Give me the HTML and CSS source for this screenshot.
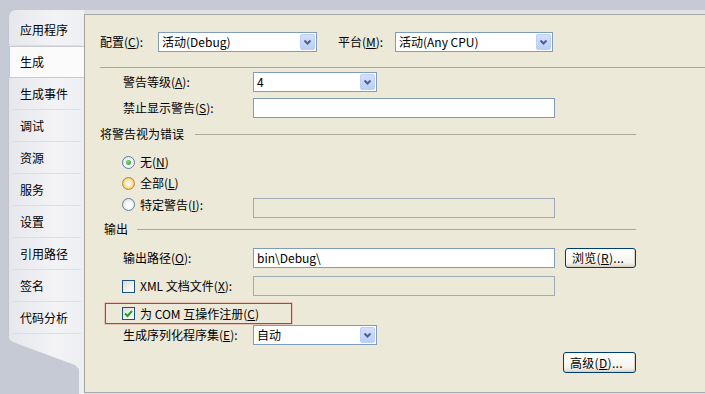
FILE: index.html
```html
<!DOCTYPE html>
<html lang="zh-CN">
<head>
<meta charset="utf-8">
<title>生成</title>
<link rel="stylesheet" href="styles.css">
</head>
<body>
<div class="window">
  <nav class="tabs">
    <div class="tab">应用程序</div>
    <div class="tab active">生成</div>
    <div class="tab">生成事件</div>
    <div class="tab">调试</div>
    <div class="tab">资源</div>
    <div class="tab">服务</div>
    <div class="tab">设置</div>
    <div class="tab">引用路径</div>
    <div class="tab">签名</div>
    <div class="tab">代码分析</div>
  </nav>
  <div class="pane">
    <main class="page">
      <div class="row">
        <span class="lbl w58">配置(<u>C</u>):</span>
        <div class="combo w159"><span class="val">活动(Debug)</span><span class="arrow"><svg width="15" height="16" viewBox="0 0 15 16"><path d="M4.5 6.5 L7.5 9.5 L10.5 6.5" fill="none" stroke="#4d6185" stroke-width="2"/></svg></span></div>
        <span class="lbl plat">平台(<u>M</u>):</span>
        <div class="combo w158"><span class="val">活动(Any CPU)</span><span class="arrow"><svg width="15" height="16" viewBox="0 0 15 16"><path d="M4.5 6.5 L7.5 9.5 L10.5 6.5" fill="none" stroke="#4d6185" stroke-width="2"/></svg></span></div>
      </div>
      <div class="sep full"></div>

      <div class="row indent r-warn">
        <span class="lbl w130">警告等级(<u>A</u>):</span>
        <div class="combo w124"><span class="val">4</span><span class="arrow"><svg width="15" height="16" viewBox="0 0 15 16"><path d="M4.5 6.5 L7.5 9.5 L10.5 6.5" fill="none" stroke="#4d6185" stroke-width="2"/></svg></span></div>
      </div>
      <div class="row indent r-supp">
        <span class="lbl w130">禁止显示警告(<u>S</u>):</span>
        <div class="input w302"></div>
      </div>

      <div class="group g-warn">将警告视为错误</div>
      <div class="row opt-row r-none">
        <span class="opt"><span class="radio on"></span>无(<u>N</u>)</span>
      </div>
      <div class="row opt-row r-all">
        <span class="opt"><span class="radio hover"></span>全部(<u>L</u>)</span>
      </div>
      <div class="row opt-row r-spec">
        <span class="opt w131"><span class="radio"></span>特定警告(<u>I</u>):</span>
        <div class="input disabled w302 drop3"></div>
      </div>

      <div class="group g-out">输出</div>
      <div class="row indent r-path">
        <span class="lbl w130">输出路径(<u>O</u>):</span>
        <div class="input w302"><span class="val">bin\Debug\</span></div>
        <button class="btn browse">浏览(<u>R</u>)...</button>
      </div>
      <div class="row opt-row r-xml">
        <span class="opt w131"><span class="check"></span>XML 文档文件(<u>X</u>):</span>
        <div class="input disabled w302"></div>
      </div>
      <div class="marked">
        <span class="opt"><span class="check on"><svg width="11" height="11" viewBox="0 0 11 11"><path d="M2 5.5 L4.5 8 L9 3" fill="none" stroke="#21a121" stroke-width="2"/></svg></span>为 COM 互操作注册(<u>C</u>)</span>
      </div>
      <div class="row indent r-ser">
        <span class="lbl w130">生成序列化程序集(<u>E</u>):</span>
        <div class="combo w124"><span class="val">自动</span><span class="arrow"><svg width="15" height="16" viewBox="0 0 15 16"><path d="M4.5 6.5 L7.5 9.5 L10.5 6.5" fill="none" stroke="#4d6185" stroke-width="2"/></svg></span></div>
      </div>
      <div class="row r-adv">
        <button class="btn adv">高级(<u>D</u>)...</button>
      </div>
    </main>
  </div>
</div>
</body>
</html>
```

FILE: styles.css
```css
* { box-sizing: border-box; }

body {
  margin: 0;
  font: 12px/1 "Noto Sans CJK SC", "Noto Sans", sans-serif;
  color: #000;
}

u { text-decoration: underline; text-underline-offset: 1px; }

.window {
  width: 705px;
  height: 394px;
  display: flex;
  padding-top: 10px;
  background: #c6cad4;
  overflow: hidden;
}

/* ---------- left tab strip ---------- */
.tabs {
  flex: none;
  width: 76px;
  margin-left: 8px;
  padding-top: 4px;
  background: linear-gradient(to right, #e6e7ec, #f3f3f6 60%, #eeeff2);
  border-top-left-radius: 7px;
  border-left: 1px solid #c3c6cf;
  clip-path: polygon(0 0, 76px 0, 76px 384px, 71px 384px, 71px 359px, 67px 355px, 10px 334px, 3px 331px, 0 327px);
}

.tab {
  position: relative;
  height: 32px;
  padding-left: 11px;
  line-height: 32px;
  font-size: 12px;
}

.tab::after {
  content: "";
  position: absolute;
  left: 3px;
  right: 3px;
  bottom: 0;
  height: 1px;
  background: #dddee3;
}

.tab.active {
  background: #fbfbfc;
  border-left: 2px solid #b8cce6;
  margin-left: -1px;
  padding-left: 10px;
  box-shadow: inset 0 1px 0 #c9cbd1, inset 0 -1px 0 #c9cbd1;
}

.tab.active::after { display: none; }

/* ---------- right pane ---------- */
.pane {
  flex: 1;
  padding-top: 4px;
  padding-bottom: 1px;
  background: #dfe1e7;
  display: flex;
}

.page {
  flex: 1;
  background: #ece9d8;
  border-top: 1px solid #a8a8a8;
  border-left: 1px solid #a3a3a3;
  border-bottom: 1px solid #a8a8a8;
  padding: 17px 69px 0 15px;
}

.row {
  display: flex;
  align-items: center;
  height: 20px;
}

.indent { padding-left: 23px; }
.opt-row { padding-left: 22px; }

.lbl { flex: none; white-space: nowrap; }
.w58 { width: 58px; }
.w130 { width: 130px; }
.w131 { width: 131px; }
.plat { margin-left: 21px; width: 57px; }

/* combo box */
.combo {
  flex: none;
  height: 20px;
  display: flex;
  align-items: center;
  background: #fff;
  border: 1px solid #7f9db9;
  padding-left: 3px;
}

.w159 { width: 159px; }
.w158 { width: 158px; }
.w124 { width: 124px; }
.w302 { width: 302px; }

.val { white-space: nowrap; }

.arrow {
  margin-left: auto;
  margin-right: 1px;
  width: 15px;
  height: 16px;
  border: 1px solid #bccff5;
  border-radius: 2px;
  background: linear-gradient(#d3e0fc, #b9cef8);
  display: flex;
  align-items: center;
  justify-content: center;
}

.arrow svg { display: block; margin: -1px; }

/* text boxes */
.input {
  flex: none;
  height: 20px;
  background: #fff;
  border: 1px solid #7f9db9;
  display: flex;
  align-items: center;
  padding-left: 3px;
}

.input.disabled {
  background: #ece9d8;
  border-color: #9fabb7;
}

/* separators & groups */
.sep {
  height: 1px;
  background: #aca899;
}

.sep.full {
  margin-top: 15px;
  margin-right: -69px;
}

.group {
  display: flex;
  align-items: center;
  height: 16px;
  white-space: nowrap;
}

.group::after {
  content: "";
  flex: 1;
  height: 1px;
  background: #aca899;
  margin-left: 11px;
}

.g-warn { margin-top: 8px; }
.g-out { margin-top: 3px; padding-left: 4px; }
.g-out::after { margin-left: 9px; }

/* radio / check */
.opt {
  flex: none;
  display: flex;
  align-items: center;
  height: 19px;
  white-space: nowrap;
}

.radio {
  flex: none;
  width: 13px;
  height: 13px;
  margin-right: 5px;
  border-radius: 50%;
  border: 1px solid #5e7d9e;
  background: radial-gradient(circle at 60% 65%, #ffffff 20%, #e9e8e2 70%, #d4d3cc);
  display: flex;
  align-items: center;
  justify-content: center;
}

.radio.on::after {
  content: "";
  width: 5px;
  height: 5px;
  border-radius: 50%;
  background: radial-gradient(circle at 40% 40%, #7fdc7f, #1f9a1f);
}

.radio.hover {
  background: radial-gradient(circle, #fdf6e6 30%, #fbd67c 60%, #f1a93a);
  border-color: #b08a4a;
}

.check {
  flex: none;
  width: 13px;
  height: 13px;
  margin-right: 5px;
  border: 1px solid #1c5180;
  background: linear-gradient(135deg, #dcdcd5, #f6f6f3 70%, #ffffff);
  display: flex;
  align-items: center;
  justify-content: center;
}

.check svg { display: block; }

/* buttons */
.btn {
  flex: none;
  height: 20px;
  padding: 0 0 0 6px;
  text-align: left;
  font: inherit;
  color: #000;
  border: 1px solid #003c74;
  border-radius: 3px;
  background: linear-gradient(#ffffff, #f5f4ee 75%, #dcd7cb);
  box-shadow: inset -1px -1px 0 #d8d2c4;
  letter-spacing: 0.3px;
}

.browse { width: 71px; margin-left: 10px; }
.adv { width: 73px; height: 21px; }

/* vertical rhythm */
.r-warn { margin-top: 4px; }
.r-supp { margin-top: 6px; }
.r-none { margin-top: 10px; }
.r-all { margin-top: 1px; }
.r-spec { margin-top: 2px; height: 23px; align-items: flex-start; }
.drop3 { margin-top: 3px; }
.r-path { margin-top: 11px; }
.r-xml { margin-top: 8px; }

.marked {
  display: flex;
  align-items: flex-start;
  margin-top: 7px;
  margin-left: 5px;
  width: 187px;
  height: 21px;
  padding-left: 16px;
  border: 1px solid #ff2020;
  box-shadow: 0 0 0 0.5px rgba(220, 40, 40, 0.4);
}

.r-ser { margin-top: 1px; }
.r-adv { margin-top: 7px; height: 21px; justify-content: flex-end; }
```
